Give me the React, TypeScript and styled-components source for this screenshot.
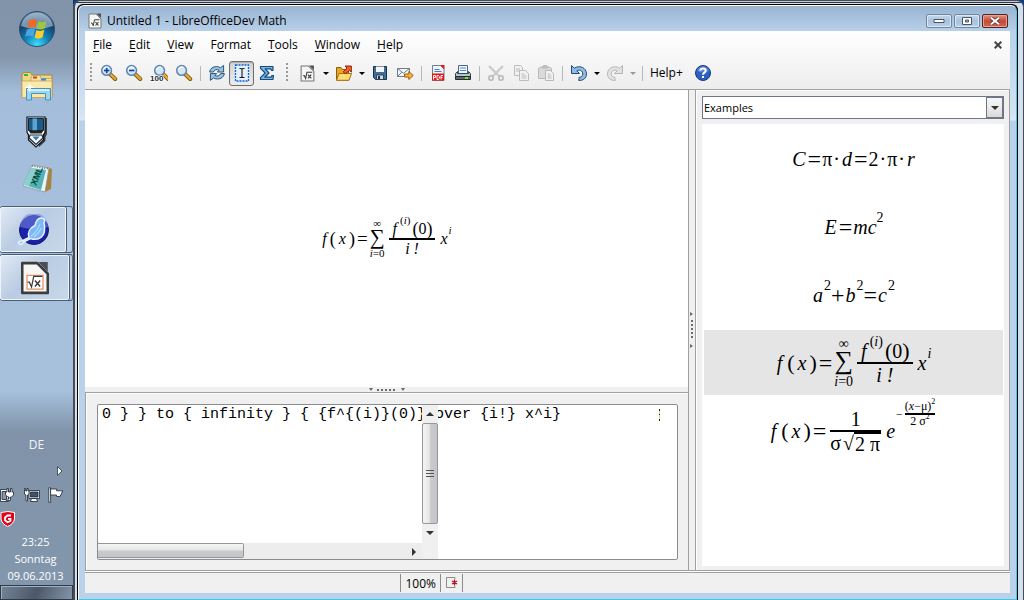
import React from "react";
import styled, { createGlobalStyle, css, ThemeProvider } from "styled-components";

const GlobalStyle = createGlobalStyle`
  * { box-sizing: border-box; }
  html, body { margin: 0; padding: 0; }
  body { font-family: "Open Sans", "Noto Sans", sans-serif; font-size: 12px; color: #000; background: #0a3c86; }
  button, select, textarea { font: inherit; color: inherit; margin: 0; padding: 0; border: 0; background: none; }
  ul { list-style: none; margin: 0; padding: 0; }
  svg { display: block; }
`;

/* ---------- desktop ---------- */

const Desktop = styled.div`
  display: flex;
  min-height: 100vh;
  overflow: hidden;
`;

const Taskbar = styled.aside`
  width: 73px;
  flex: none;
  display: flex;
  flex-direction: column;
  align-items: center;
  background: linear-gradient(#8093a8 0, #8497ad 58px, #a4bddb 92px, #a7c1dd 65%, #8093a9 72%, #8296ac 100%);
`;

const Launcher = styled.button<{ $height: number }>`
  width: 73px;
  height: ${(p) => p.$height}px;
  display: flex;
  align-items: center;
  justify-content: center;
`;

const TaskStack = styled.div`
  align-self: stretch;
  height: 47px;
  margin-bottom: 1px;
  display: flex;
  border-top: 1px solid #4a5d76;
  border-bottom: 1px solid #4a5d76;
  border-right: 1px solid #5c6f88;
  border-radius: 3px;
  background: #bacde3;
`;

const TaskButton = styled.button<{ $width: number }>`
  width: ${(p) => p.$width}px;
  display: flex;
  align-items: center;
  justify-content: center;
  border: 1px solid #eef4fa;
  border-radius: 2px;
  background: linear-gradient(135deg, #dfe9f4, #b9cce3 45%, #c8d8ea);
  box-shadow: 1px 0 0 #4a5d76, -1px 0 0 #4a5d76;
`;

const Language = styled.div`
  margin-top: auto;
  line-height: 16px;
  color: #f2f5f9;
`;

const TrayArrow = styled.button`
  align-self: flex-end;
  height: 16px;
  margin: 10px 10px 8px;
`;

const Tray = styled.div`
  align-self: stretch;
  display: flex;
  flex-wrap: wrap;
  gap: 8px;
`;

const TrayButton = styled.button`
  width: 16px;
  height: 16px;
`;

const Clock = styled.time`
  padding: 6px 2px 0 0;
  font-size: 11px;
  line-height: 17px;
  text-align: center;
  color: #fff;
`;

const ShowDesktop = styled.button`
  align-self: stretch;
  height: 15px;
  margin-top: 1px;
  border: 1px solid #303a46;
  box-shadow: inset 1px 1px 0 #a2b0c0;
  background: linear-gradient(110deg, #748599, #4c5868 50%, #8395a9);
`;

/* ---------- window frame ---------- */

const Backdrop = styled.div`
  flex: 1;
  min-width: 0;
  display: flex;
  padding: 3px 5px 0 2px;
  border: solid #464b56;
  border-width: 1px 1px 0 2px;
  border-radius: 7px 7px 0 0;
  background: linear-gradient(#c4cad3 0 1px, #333740 1px 2px, #d3dfec 2px);
`;

const Frame = styled.div`
  flex: 1;
  min-width: 0;
  display: flex;
  border: solid #000;
  border-width: 1px 1px 0 1px;
  border-radius: 6px 6px 0 0;
  background: #000;
`;

const AppWindow = styled.div`
  flex: 1;
  min-width: 0;
  display: flex;
  flex-direction: column;
  padding: 0 6px 6px;
  border: 1px solid #fff;
  border-right-color: #40c8e8;
  border-bottom-color: #40c8e8;
  border-radius: 6px 6px 0 0;
  background: linear-gradient(#99b4d1 0, #b9d1ea 26px, #d3e3f4 108px, #dbe8f6 114px, #b9d1ea 115px);
`;

const TitleBar = styled.header`
  height: 25px;
  display: flex;
  align-items: center;
  gap: 4px;
  padding: 5px 2px 0;
`;

const Title = styled.h1`
  flex: 1;
  margin: 0;
  font-size: 12px;
  font-weight: 400;
  line-height: 16px;
`;

const WindowButton = styled.button<{ $danger?: boolean }>`
  width: 26px;
  height: 14px;
  margin-left: -2px;
  display: flex;
  align-items: center;
  justify-content: center;
  border: 1px solid ${(p) => (p.$danger ? "#5b1e22" : "#6f87a3")};
  border-radius: 2px;
  box-shadow: inset 0 0 0 1px ${(p) => (p.$danger ? "#e5a493" : "#dbe7f3")};
  background: ${(p) =>
    p.$danger ? "linear-gradient(#dd9583, #c24a35 50%, #d06a50)" : "linear-gradient(#c6d7ea, #a9c1dc 50%, #b8cfe6)"};
`;

const WindowButtons = styled.div`
  display: flex;
  gap: 4px;
`;

const Content = styled.div`
  flex: 1;
  min-height: 0;
  display: flex;
  flex-direction: column;
  background: #f0f0f0;
`;

const Chrome = styled.div`
  border-bottom: 1px solid #a0a0a0;
  background: linear-gradient(#fff, #fafafa 30%, #ededed);
`;

const MenuBar = styled.nav`
  height: 29px;
  display: flex;
  align-items: center;
  gap: 1px;
  padding: 0 5px 2px 0;
`;

const MenuItem = styled.button`
  padding: 0 8px;
  line-height: 20px;
  u { text-underline-offset: 2px; }
`;

const CloseDocument = styled.button`
  width: 14px;
  height: 14px;
  margin-left: auto;
  display: flex;
  align-items: center;
  justify-content: center;
`;

const Toolbar = styled.div`
  height: 29px;
  display: flex;
  align-items: center;
  padding-bottom: 3px;
`;

const Grip = styled.span<{ $wide?: boolean }>`
  width: ${(p) => (p.$wide ? 16 : 11)}px;
  height: 20px;
  display: flex;
  justify-content: center;
  &::before {
    content: "";
    width: 2px;
    background: repeating-linear-gradient(#9a9a9a 0 2px, transparent 2px 4px);
  }
`;

const Divider = styled.span`
  width: 8px;
  height: 15px;
  display: flex;
  justify-content: center;
  &::before {
    content: "";
    width: 1px;
    background: #b9b9b9;
  }
`;

const ToolButton = styled.button<{ $active?: boolean }>`
  width: 25px;
  height: 25px;
  display: flex;
  align-items: center;
  justify-content: center;
  ${(p) =>
    p.$active &&
    css`
      border: 1px solid #6e6e6e;
      border-radius: 3px;
      background: linear-gradient(#d4d4d4, #ececec);
      box-shadow: inset 0 1px 1px #aaa;
    `}
`;

const Caret = styled.button<{ $faded?: boolean }>`
  width: 11px;
  height: 25px;
  display: flex;
  align-items: center;
  justify-content: center;
  &::before {
    content: "";
    border: solid transparent;
    border-width: 3px 3px 0;
    border-top-color: ${(p) => (p.$faded ? "#9a9a9a" : "#000")};
  }
`;

const HelpText = styled.button`
  width: 44px;
  text-align: left;
  padding-left: 4px;
  line-height: 20px;
`;

/* ---------- workspace ---------- */

const Workspace = styled.div`
  flex: 1;
  min-height: 0;
  display: flex;
  border-bottom: 1px solid #a0a0a0;
`;

const LeftPane = styled.div`
  flex: 1;
  min-width: 0;
  display: flex;
  flex-direction: column;
  border-right: 1px solid #a0a0a0;
`;

const Canvas = styled.main`
  flex: 1;
  display: flex;
  align-items: center;
  justify-content: center;
  background: #fff;
`;

const HorizontalSplitter = styled.div`
  height: 5px;
  display: flex;
  justify-content: center;
  align-items: center;
`;

const VerticalSplitter = styled.div`
  width: 6px;
  display: flex;
  justify-content: center;
  align-items: center;
`;

const CommandPane = styled.section`
  height: 178px;
  padding: 11px 10px 10px 11px;
  border: 1px solid #a0a0a0;
  border-width: 1px 0 0 1px;
  box-shadow: inset 1px 1px 0 #fff;
`;

const Editor = styled.div`
  position: relative;
  height: 156px;
  border: 1px solid #8a8c92;
  border-radius: 2px;
  background: #fff;
`;

const CommandInput = styled.textarea`
  display: block;
  width: 100%;
  height: 100%;
  padding: 1px 0 0 4px;
  resize: none;
  outline: 0;
  overflow: hidden;
  white-space: pre;
  font-family: "Liberation Mono", monospace;
  font-size: 15px;
  line-height: 17px;
`;

const BraceTrace = styled.span`
  position: absolute;
  top: 4px;
  right: 17px;
  width: 1px;
  height: 12px;
  background: linear-gradient(#222 0 2px, #f0cc80 2px 5px, #222 5px 6px, #f0cc80 6px 10px, #222 10px);
`;

const ScrollColumn = styled.div`
  position: absolute;
  top: 0;
  bottom: 0;
  left: 324px;
  width: 16px;
  padding-bottom: 17px;
  display: flex;
  flex-direction: column;
  background: #f0f0f0;
`;

const ScrollRow = styled.div`
  position: absolute;
  left: 0;
  bottom: 0;
  width: 324px;
  height: 16px;
  display: flex;
  justify-content: space-between;
  background: #ededed;
`;

const ScrollArrow = styled.button`
  width: 16px;
  height: 18px;
  display: flex;
  align-items: center;
  justify-content: center;
`;

const VerticalThumb = styled.div`
  flex: 1;
  display: flex;
  align-items: center;
  justify-content: center;
  border: 1px solid #979797;
  border-radius: 2px;
  background: linear-gradient(90deg, #f5f5f5, #e6e6e7 45%, #c9cacd 55%, #c4c5ca);
`;

const HorizontalThumb = styled.div`
  width: 146px;
  height: 15px;
  border: 1px solid #979797;
  border-left: 0;
  border-radius: 0 2px 2px 0;
  background: linear-gradient(#f5f5f5, #e6e6e7 45%, #c9cacd 55%, #c4c5ca);
`;

const ElementsPane = styled.section`
  width: 315px;
  display: flex;
  flex-direction: column;
  gap: 5px;
  padding: 6px 5px 4px 6px;
  border: solid #a0a0a0;
  border-width: 0 1px 0 1px;
  box-shadow: inset 1px 1px 0 #fff;
`;

const CategoryField = styled.label`
  position: relative;
  height: 23px;
  display: flex;
  border: 1px solid #6f7684;
  background: #fff;
`;

const Category = styled.select`
  flex: 1;
  padding: 0 1px;
  appearance: none;
  outline: 0;
  font-size: 11px;
`;

const CategoryArrow = styled.span`
  width: 17px;
  display: flex;
  align-items: center;
  justify-content: center;
  border: 1px solid #6f7684;
  background: linear-gradient(#f6f6f6, #ebebeb 50%, #d8d8d8);
  pointer-events: none;
`;

const Examples = styled.ul`
  flex: 1;
  display: flex;
  flex-direction: column;
  gap: 3px;
  padding: 2px 1px 0 2px;
  background: #fff;
`;

const Example = styled.li<{ $selected?: boolean }>`
  height: 65px;
  display: flex;
  align-items: center;
  justify-content: center;
  background: ${(p) => (p.$selected ? "#e5e5e5" : "transparent")};
`;

const StatusBar = styled.footer`
  height: 21px;
  margin-top: 1px;
  display: flex;
  align-items: center;
  border-top: 1px solid #a0a0a0;
  box-shadow: 0 -1px 0 #fff;
`;

const StatusSpacer = styled.span`
  width: 34%;
`;

const StatusCell = styled.span<{ $last?: boolean }>`
  height: 18px;
  display: flex;
  align-items: center;
  padding: 0 4px 0 5px;
  border-left: 1px solid #8c8c8c;
  border-right: ${(p) => (p.$last ? "1px solid #8c8c8c" : "0")};
`;

/* ---------- formula typesetting ---------- */

const display = { base: 16, small: 11, relation: 19, paren: 18, fn: 1, gap: 2, lift: 16, part: 18, op: 21, sum: 18, drop: 3, limit: 9 };
const sample = { base: 20, small: 14, relation: 24, paren: 22, fn: 3, gap: 2, lift: 18, part: 22, op: 26, sum: 23, drop: 4, limit: 11 };

const Row = styled.span<{ $close?: boolean }>`
  display: flex;
  align-items: center;
  justify-content: center;
  gap: ${(p) => (p.$close ? 1 : p.theme.gap)}px;
  font-family: "Liberation Serif", serif;
  font-size: ${(p) => p.theme.base}px;
  line-height: ${(p) => p.theme.base}px;
  white-space: pre;
`;

const Tight = styled(Row)`
  gap: 0;
`;

const Var = styled.i`
  padding: 0 1px;
`;

const FunctionName = styled(Var)`
  padding-right: ${(p) => p.theme.fn}px;
`;

const Relation = styled.span`
  font-size: ${(p) => p.theme.relation}px;
`;

const Paren = styled.span`
  font-size: ${(p) => p.theme.paren}px;
`;

const Sup = styled(Tight)`
  font-size: ${(p) => p.theme.small}px;
  line-height: ${(p) => p.theme.small}px;
  margin-bottom: ${(p) => p.theme.lift}px;
`;

const Limits = styled.span`
  display: flex;
  flex-direction: column;
  align-items: center;
  font-size: ${(p) => p.theme.small}px;
  line-height: ${(p) => p.theme.limit}px;
`;

const BigOperator = styled.span`
  padding-bottom: ${(p) => p.theme.drop}px;
  font-size: ${(p) => p.theme.op}px;
  line-height: ${(p) => p.theme.sum}px;
`;

const Fraction = styled.span`
  display: flex;
  flex-direction: column;
  margin: 0 2px;
`;

const Numerator = styled(Row)`
  height: ${(p) => p.theme.part}px;
  padding: 0 3px;
`;

const Denominator = styled(Row)`
  height: ${(p) => p.theme.part}px;
`;

const Bar = styled.span`
  height: 2px;
  background: #000;
`;

const Root = styled.span`
  padding: 0 1px;
  border-top: 2px solid #000;
`;

const Exponent = styled(Tight)`
  font-size: 12px;
  line-height: 12px;
  margin-bottom: 34px;
`;

const SmallPart = styled(Tight)`
  font-size: 12px;
  line-height: 13px;
  height: 13px;
`;

const TinySup = styled.span`
  font-size: 8px;
  line-height: 8px;
  margin-bottom: 8px;
`;

const FunctionHead = () => (
  <>
    <FunctionName>f</FunctionName>
    <Paren>(</Paren>
    <Var>x</Var>
    <Paren>)</Paren>
    <Relation>=</Relation>
  </>
);

const Taylor = () => (
  <Row>
    <FunctionHead />
    <Limits>
      <span>∞</span>
      <BigOperator>∑</BigOperator>
      <span><i>i</i>=0</span>
    </Limits>
    <Fraction>
      <Numerator>
        <Var>f</Var>
        <Sup>(<i>i</i>)</Sup>
        <Tight><Paren>(</Paren>0<Paren>)</Paren></Tight>
      </Numerator>
      <Bar />
      <Denominator><i>i !</i></Denominator>
    </Fraction>
    <Tight>
      <Var>x</Var>
      <Sup><i>i</i></Sup>
    </Tight>
  </Row>
);

const Gaussian = () => (
  <Row>
    <FunctionHead />
    <Fraction>
      <Numerator><span>1</span></Numerator>
      <Bar />
      <Denominator>
        <span>σ</span>
        <Tight><span>√</span><Root>2 π</Root></Tight>
      </Denominator>
    </Fraction>
    <Tight>
      <Var>e</Var>
      <Exponent>
        <span>−</span>
        <Fraction>
          <SmallPart>(<i>x</i>−μ)<TinySup>2</TinySup></SmallPart>
          <Bar />
          <SmallPart>2 σ<TinySup>2</TinySup></SmallPart>
        </Fraction>
      </Exponent>
    </Tight>
  </Row>
);

/* ---------- icons ---------- */

const Magnifier = ({ sign }: { sign?: "plus" | "minus" | "hundred" }) => (
  <svg width="18" height="18" viewBox="0 0 18 18">
    <g transform={sign === "hundred" ? "translate(3 0)" : undefined}>
      <path d="M10 10l5.2 5" stroke="#7b5410" strokeWidth="4" strokeLinecap="round" />
      <path d="M10.6 10.4l4.6 4.4" stroke="#e6a92e" strokeWidth="2.4" strokeLinecap="round" />
      <circle cx="6.6" cy="6.4" r="4.9" fill="#d4e6f6" stroke="#5f86b0" strokeWidth="1.5" />
      <path d="M3.6 5.6a3.3 3.3 0 0 1 5-1.8" stroke="#fff" strokeWidth="1.2" fill="none" />
      {(sign === "plus" || sign === "minus") && <path d="M4 6.5h5.4" stroke="#0c4391" strokeWidth="1.6" />}
      {sign === "plus" && <path d="M6.7 3.8v5.4" stroke="#0c4391" strokeWidth="1.6" />}
    </g>
    {sign === "hundred" && (
      <text x="0" y="17" fontSize="8" fontWeight="700" fontFamily="Liberation Sans, sans-serif" fill="#122c42" stroke="#fff" strokeWidth="1.5" paintOrder="stroke">100</text>
    )}
  </svg>
);

const Refresh = () => (
  <svg width="18" height="18" viewBox="0 0 18 18" fill="#9fc3de" stroke="#27567c" strokeWidth="1" strokeLinejoin="round">
    <path d="M1.6 8C2.2 4.4 5 2.6 8.6 2.6c1.6 0 2.8.4 3.8 1.2L15.600 1.400V8H9.400l1.800-2C8.600 5 6.200 5.600 5.400 8z" />
    <path d="M16.400 9.600c-.6 3.600-3.400 5.400-7 5.400-1.600 0-2.800-.4-3.800-1.200L2.400 16.400V9.600h6.200l-1.800 2c2.600 1 5 .4 5.800-2z" />
  </svg>
);

const TextCursor = () => (
  <svg width="16" height="18" viewBox="0 0 16 18" fill="none">
    <path d="M1.500 1h13v16h-13z" fill="#e4effc" stroke="#0a66d0" strokeWidth="1.300" strokeDasharray="2 1" />
    <path d="M5.500 4.500h1.500q1 0 1 1 0-1 1-1h1.500M8 5v8M5.500 13.500h1.500q1 0 1-1 0 1 1 1h1.500" stroke="#1a1a1a" strokeWidth="1.100" />
  </svg>
);

const Sigma = () => (
  <svg width="16" height="16" viewBox="0 0 16 16">
    <path d="M1.500 1.500h12.500v3.800h-1.600l-.6-1.400H6.200L10 8l-4.300 4.200h6.400l.7-1.500h1.700l-.6 3.800H1.500v-1.900L6.200 8 1.500 3.400z" fill="#7fb4dc" stroke="#0f4c81" strokeWidth="1.200" strokeLinejoin="round" />
  </svg>
);

const MathDocument = ({ size = 16, framed }: { size?: number; framed?: boolean }) => (
  <svg width={size} height={size} viewBox="0 0 32 32">
    <path d="M4 2h14l10 10v18H4z" fill="#f6f6f4" stroke={framed ? "#3c3c3c" : "#777"} strokeWidth={framed ? 2.400 : 2} strokeLinejoin="round" />
    <path d="M19 1h9v9z" fill="#4a4f57" />
    {framed && <path d="M8.500 13.500h15v13h-15z" fill="#fff" stroke="#e8925e" strokeWidth="1.200" />}
    <path d="M8 20h2l2.500 5.500L15 13.500h10" fill="none" stroke="#3b3b3b" strokeWidth={framed ? 1.400 : 2} transform={framed ? "translate(2.500 3.500) scale(.82)" : undefined} />
    <path d="M17 18l6 7m0-7l-6 7" stroke="#3b3b3b" strokeWidth={framed ? 1.700 : 2.200} transform={framed ? "translate(2 3.500) scale(.82)" : undefined} />
  </svg>
);

const OpenFolder = () => (
  <svg width="18" height="18" viewBox="0 0 18 18" strokeLinejoin="round">
    <path d="M1.500 16V3.500H6L7.500 5.500h6V16z" fill="#e6a626" stroke="#8d5b09" />
    <path d="M1.500 16.300L4 9.500h12.500L14 16.300z" fill="#ffdc73" stroke="#a56e10" />
    <path d="M10 2h6.300v6.200l-2-2L10.500 10 8.300 7.800 12 4z" fill="#f0642c" stroke="#8f2106" />
  </svg>
);

const Save = () => (
  <svg width="16" height="16" viewBox="0 0 16 16">
    <path d="M1.500 1.500h13v13h-11l-2-2z" fill="#3f6e96" stroke="#16324c" />
    <path d="M4 1.500h8v5.500H4z" fill="#f3f6f8" />
    <path d="M4.500 10h7v4.500h-7z" fill="#cfd9e0" stroke="#16324c" strokeWidth=".8" />
    <path d="M6 11h2v3H6z" fill="#16324c" />
  </svg>
);

const Mail = () => (
  <svg width="18" height="16" viewBox="0 0 18 16">
    <path d="M1.500 3.500h12v8h-12z" fill="#f5f8fb" stroke="#6c7f92" />
    <path d="M1.500 3.500l6 4.700 6-4.700M1.500 11.500l4.300-4.300" fill="none" stroke="#6c7f92" />
    <path d="M8.500 9h4.300V6.500l4.400 4-4.400 4V12H8.500z" fill="#f7b733" stroke="#a35a0c" strokeLinejoin="round" />
  </svg>
);

const Pdf = () => (
  <svg width="16" height="18" viewBox="0 0 16 18">
    <path d="M2.500 1.500h8l3.500 3.500v11.500H2.500z" fill="#eef3f7" stroke="#6b8195" />
    <path d="M10 1h4.500v4.500z" fill="#dd1c1c" />
    <path d="M4.500 5.500h5M4.500 7.500h7" stroke="#4182ba" />
    <path d="M2 9.500h12v7H2z" fill="#e01818" />
    <path d="M3.500 15.500v-4h2v2h-2M7 11.500v4h1.500l.8-1v-2l-.8-1zM11 15.500v-4h2m-2 2h1.500" fill="none" stroke="#fff" />
  </svg>
);

const Printer = () => (
  <svg width="18" height="18" viewBox="0 0 18 18">
    <path d="M4.500 1.500h9v8h-9z" fill="#f0f6fb" stroke="#4c6780" />
    <path d="M6 4h6M6 6.500h6" stroke="#4c8fcf" />
    <path d="M1.500 9.500l2-2v2h11v-2l2 2v5h-15z" fill="#b9c3ca" stroke="#39434c" strokeLinejoin="round" />
    <path d="M1.500 12.500h15v3h-15z" fill="#5d6870" stroke="#242c33" />
    <path d="M11 13h3v2h-3z" fill="#79e21a" />
  </svg>
);

const Cut = () => (
  <svg width="18" height="18" viewBox="0 0 18 18" fill="none" stroke="#bebebe" strokeWidth="1.800">
    <path d="M2 2l10.500 10.500M16 2L5.500 12.500" stroke="#cacaca" strokeWidth="2.200" />
    <circle cx="4" cy="14" r="2.200" />
    <circle cx="14" cy="14" r="2.200" />
  </svg>
);

const Copy = () => (
  <svg width="18" height="18" viewBox="0 0 18 18" fill="#f1f1f1" stroke="#bcbcbc">
    <path d="M2.500 1.500h6l2 2v8h-8zM4 5h4M4 7h4" />
    <path d="M7.500 6.500h6l3 3v7h-9zM9.500 10h3M9.500 12h5M9.500 14h5" />
  </svg>
);

const Paste = () => (
  <svg width="18" height="18" viewBox="0 0 18 18" fill="#dadada" stroke="#b8b8b8">
    <path d="M1.500 4.500L3.500 3h9l2 1.500v10h-13z" />
    <path d="M5 4l1.500-2.500h3L11 4z" fill="#c4c4c4" />
    <path d="M8.500 6.500h5l3 3v7h-8zM10.500 10h3M10.500 12h4M10.500 14h4" fill="#f3f3f3" />
  </svg>
);

const Turn = ({ redo }: { redo?: boolean }) => (
  <svg width="18" height="18" viewBox="0 0 18 18" strokeLinejoin="round">
    <path
      transform={redo ? "translate(18 0) scale(-1 1)" : undefined}
      d="M1.500 1.500v8h8L6.800 6.800c2.200-1.400 6-.4 6 3.200 0 2.200-1.800 3.200-3.600 3.200l-.4 3.300c4.400.2 7.700-2.400 7.700-6.700C16.500 3.600 9.400.8 4.300 4.200z"
      fill={redo ? "#e2e2e2" : "#8fbce0"}
      stroke={redo ? "#b6b6b6" : "#1d4d78"}
    />
  </svg>
);

const Help = () => (
  <svg width="18" height="18" viewBox="0 0 18 18">
    <circle cx="9" cy="9" r="7.500" fill="#2c5fc0" stroke="#173a80" />
    <path d="M3 7a6.200 6.200 0 0 1 12 0q-6 3-12 0z" fill="#6f97de" opacity=".6" />
    <path d="M6.300 6.800C6.300 3.600 11.700 3.800 11.700 6.800 11.700 8.800 9 8.600 9 10.800" fill="none" stroke="#fff" strokeWidth="2" />
    <path d="M8 12h2v2H8z" fill="#fff" />
  </svg>
);

const StartOrb = () => (
  <svg width="38" height="38" viewBox="0 0 38 38">
    <defs>
      <radialGradient id="orb" cx=".5" cy=".95" r=".9">
        <stop offset="0" stopColor="#3fe0ff" />
        <stop offset=".4" stopColor="#0f7fb4" />
        <stop offset=".75" stopColor="#1a3f66" />
        <stop offset="1" stopColor="#5d7f9f" />
      </radialGradient>
    </defs>
    <circle cx="19" cy="19" r="17.500" fill="url(#orb)" stroke="#2a4f74" />
    <path d="M3 16C5 7 12 2.500 19 2.500S33 7 35 16q-16 6-32 0z" fill="#d4e6f3" opacity=".5" />
    <path d="M11 10.500q4.500-2.500 8 0L17.300 18q-4-2.200-8 0z" fill="#ee6a24" />
    <path d="M20.500 11.300q3.500 2.200 8-.4L26.800 18.300q-4 2.300-8 .2z" fill="#9cc83c" />
    <path d="M9 19.500q4-2.200 8 0L15.200 27q-4-2.300-8.200 0z" fill="#4aa4e4" />
    <path d="M18.400 20q4 2 8-.2L24.600 27.300q-4.500 2.500-8 .3z" fill="#ffcb2e" />
  </svg>
);

const Explorer = () => (
  <svg width="34" height="30" viewBox="0 0 34 30">
    <path d="M2 26V4l1.500-2.500h7L12 4h20v22z" fill="#f0d682" stroke="#a98a3c" />
    <path d="M11 7l1-2.500h8l1 3h11V26H11z" fill="#f6e2a0" stroke="#b89a4c" strokeWidth=".7" />
    <path d="M2 10h30v16.500H2z" fill="#f9e9ae" stroke="#c2a455" strokeWidth=".8" />
    <path d="M4 3h4v2H4z" fill="#2cb64a" />
    <path d="M13 5.500h4v2h-4z" fill="#da3b2c" />
    <path d="M21 7.500h5v2h-5z" fill="#2b8fe0" />
    <path d="M6.500 29V17.500h24V29h-5v-6.500h-14V29z" fill="#9dd6f2" stroke="#4393c0" />
    <path d="M8 19h21" stroke="#e4f6ff" strokeWidth="1.500" />
    <path d="M9.500 12v9M5 16.500h9M7 14l5 5m0-5l-5 5" stroke="#fff" strokeWidth=".8" />
  </svg>
);

const Pen = () => (
  <svg width="24" height="32" viewBox="0 0 24 32">
    <path d="M5 2h17v16l-1.500 3v4L14 31z" fill="#3b3f44" />
    <path d="M2 1h18v15l-1.500 3v5L11 31l-7.500-7v-5L2 16z" fill="#fff" stroke="#111" strokeWidth="1.200" />
    <path d="M3.500 2.500h15v12h-15z" fill="#1c5a86" stroke="#0d2638" />
    <path d="M7.500 2.500h4.500v12H7.500z" fill="#5ba4d2" />
    <path d="M3.500 14.500h15l-2 3h-11z" fill="#222" />
    <path d="M5 19h12l1 3-7 6.500L4 22z" fill="#eef5f9" stroke="#1a2833" strokeWidth="1.200" />
    <path d="M7.500 20.500h7L11 24.500z" fill="#2c7ba8" />
  </svg>
);

const XmlPad = () => (
  <svg width="32" height="30" viewBox="0 0 32 30">
    <path d="M26 4l5 2-1 20-6 3z" fill="#a9823c" />
    <path d="M11 2l17 3-4 24-22-6z" fill="#eef3f3" stroke="#809a9a" strokeWidth=".8" />
    <path d="M10 5l15 2-5 20L2 21.500z" fill="#54b3b8" />
    <path d="M10 5l6 .8L8 23.200 2 21.500z" fill="#9ad6d8" opacity=".8" />
    <text transform="translate(15 23) rotate(-68)" fontSize="9" fontWeight="700" fontFamily="Liberation Sans, sans-serif" fill="#0b4a35">XML</text>
    <path d="M11 3l17 3" stroke="#6b7777" strokeWidth="1.500" strokeDasharray="1 1.500" />
  </svg>
);

const SeaMonkey = () => (
  <svg width="34" height="32" viewBox="0 0 34 32">
    <circle cx="18" cy="16" r="14.500" fill="#1c1fa8" stroke="#14156c" />
    <path d="M4 13a14 14 0 0 1 28 0q-13 4-28 0z" fill="#6f82de" opacity=".6" />
    <path d="M2.500 29.500c0-1.500 1.500-2.500 3.500-2.500l7-3.500c-2-5 1-9.500 6-12 1-4.500 3.500-8 7-7.500 2.500.5 3.500 2.500 2 4.500 1 5 1.500 11-2.500 14.500-3.500 3-8 2.500-11 1.500L7.500 28c-.5 2-3.500 3-5 1.500z" fill="#7ab8f8" stroke="#e5f3ff" strokeWidth="1.500" />
    <path d="M15 22.500q6-5 9-12M18 23q5-4 7.500-9" stroke="#b5daff" strokeWidth="1.200" fill="none" />
  </svg>
);

const PowerIcon = () => (
  <svg width="16" height="16" viewBox="0 0 16 16" stroke="#1c2735" strokeWidth=".8">
    <path d="M.5 2.500h8v12h-8z" fill="#fff" />
    <path d="M2 4.500h4.500v8H2z" fill="#8798ac" />
    <path d="M5.500 5H7V1.500h1.500V5h2V1.500H12V5h1.500v3l-2 2h-1v3.500H6V12h3v-2H8L5.500 8z" fill="#fff" />
  </svg>
);

const NetworkIcon = () => (
  <svg width="16" height="16" viewBox="0 0 16 16" stroke="#1c2735" strokeWidth=".8">
    <path d="M5 3.500h10.500v8H5z" fill="#fff" />
    <path d="M6.500 5H14v5H6.500z" fill="#40536a" />
    <path d="M7.500 11.500h5l1 3h-7z" fill="#fff" />
    <path d="M.5 1.500h1.200V4H3V1.500h1.200V4H5v3L3.500 8v6H2V8L.5 7z" fill="#fff" />
  </svg>
);

const FlagIcon = () => (
  <svg width="16" height="16" viewBox="0 0 16 16" stroke="#1c2735" strokeWidth=".8">
    <path d="M.8.800h1.800v14.500H.8z" fill="#fff" />
    <path d="M2.600 2h6v1.800h6.200L12 9.500H8.500V8H2.600z" fill="#fff" />
  </svg>
);

const ShieldIcon = () => (
  <svg width="16" height="16" viewBox="0 0 16 16">
    <path d="M1 1.500q7-2 13.500 0v6.500q-1 5-6.800 7.500Q2 13 1 8z" fill="#e2001a" stroke="#fff" />
    <path d="M11 4.500H7.500L5 6.500v2.800l2.500 2 3-1.300V7.800H8" fill="none" stroke="#fff" strokeWidth="1.800" />
  </svg>
);

const ModifiedIcon = () => (
  <svg width="12" height="12" viewBox="0 0 12 12" fill="none">
    <path d="M9 2V.5H.5v10H9V9" stroke="#8b8b8b" />
    <path d="M8.500 2.500v6M6 4l5 3M11 4L6 7" stroke="#b0121c" strokeWidth="1.300" />
  </svg>
);

const SplitterMarks = ({ vertical }: { vertical?: boolean }) => (
  <svg width={vertical ? 4 : 36} height={vertical ? 36 : 4} viewBox={vertical ? "0 0 4 36" : "0 0 36 4"} fill="#6a6a6a">
    <g transform={vertical ? "matrix(0 1 1 0 0 0)" : undefined}>
      <path d="M0 0h4L2 3zM32 0h4L34 3z" />
      <path d="M8 1h2v2H8zM12 1h2v2h-2zM16 1h2v2h-2zM20 1h2v2h-2zM24 1h2v2h-2z" />
    </g>
  </svg>
);

const Triangle = ({ d }: { d: string }) => (
  <svg width="8" height="8" viewBox="0 0 8 8" fill="#333"><path d={d} /></svg>
);

/* ---------- page ---------- */

const menus: [string, string, string][] = [
  ["", "F", "ile"], ["", "E", "dit"], ["", "V", "iew"], ["F", "o", "rmat"], ["", "T", "ools"], ["", "W", "indow"], ["", "H", "elp"],
];

const command = "0 } } to { infinity } { {f^{(i)}(0)} over {i!} x^i}";

export default function App() {
  return (
    <Desktop>
      <GlobalStyle />
      <Taskbar>
        <Launcher $height={57} aria-label="Start"><StartOrb /></Launcher>
        <Launcher $height={57} aria-label="Explorer"><Explorer /></Launcher>
        <Launcher $height={36} aria-label="Pen"><Pen /></Launcher>
        <Launcher $height={56} aria-label="XML Notepad"><XmlPad /></Launcher>
        <TaskStack><TaskButton $width={66} aria-label="SeaMonkey"><SeaMonkey /></TaskButton></TaskStack>
        <TaskStack><TaskButton $width={69} aria-label="Math"><MathDocument size={34} framed /></TaskButton></TaskStack>
        <Language>DE</Language>
        <TrayArrow aria-label="Show hidden icons">
          <svg width="6" height="10" viewBox="0 0 6 10"><path d="M.5.500L5 5 .5 9.500z" fill="#fff" stroke="#46566a" /></svg>
        </TrayArrow>
        <Tray>
          <TrayButton aria-label="Power"><PowerIcon /></TrayButton>
          <TrayButton aria-label="Network"><NetworkIcon /></TrayButton>
          <TrayButton aria-label="Action center"><FlagIcon /></TrayButton>
          <TrayButton aria-label="Security"><ShieldIcon /></TrayButton>
        </Tray>
        <Clock>23:25<br />Sonntag<br />09.06.2013</Clock>
        <ShowDesktop aria-label="Show desktop" />
      </Taskbar>
      <Backdrop>
        <Frame>
          <AppWindow>
            <TitleBar>
              <MathDocument size={16} />
              <Title>Untitled 1 - LibreOfficeDev Math</Title>
              <WindowButtons>
                <WindowButton aria-label="Minimize">
                  <svg width="12" height="6" viewBox="0 0 12 6"><path d="M1 1.500h10v3H1z" fill="#fff" stroke="#4a5566" /></svg>
                </WindowButton>
                <WindowButton aria-label="Maximize">
                  <svg width="10" height="8" viewBox="0 0 10 8"><path d="M.5.500h9v7h-9z" fill="#fff" stroke="#4a5566" /><path d="M3.500 3h3v2h-3z" fill="#a9c1dc" stroke="#4a5566" /></svg>
                </WindowButton>
                <WindowButton $danger aria-label="Close">
                  <svg width="12" height="8" viewBox="0 0 12 8"><path d="M2 .8l8 6.400M10 .8L2 7.200" stroke="#5a3030" strokeWidth="3.400" /><path d="M2 .8l8 6.400M10 .8L2 7.200" stroke="#fff" strokeWidth="2" /></svg>
                </WindowButton>
              </WindowButtons>
            </TitleBar>
            <Content>
              <Chrome>
                <MenuBar>
                  {menus.map(([a, k, b]) => (
                    <MenuItem key={a + k + b}>{a}<u>{k}</u>{b}</MenuItem>
                  ))}
                  <CloseDocument aria-label="Close document">
                    <svg width="8" height="8" viewBox="0 0 8 8"><path d="M.7.700l6.600 6.600M7.300.700L.7 7.300" stroke="#444" strokeWidth="2" /></svg>
                  </CloseDocument>
                </MenuBar>
                <Toolbar>
                  <Grip />
                  <ToolButton aria-label="Zoom in"><Magnifier sign="plus" /></ToolButton>
                  <ToolButton aria-label="Zoom out"><Magnifier sign="minus" /></ToolButton>
                  <ToolButton aria-label="Zoom 100%"><Magnifier sign="hundred" /></ToolButton>
                  <ToolButton aria-label="Show all"><Magnifier /></ToolButton>
                  <Divider />
                  <ToolButton aria-label="Update"><Refresh /></ToolButton>
                  <ToolButton $active aria-label="Formula cursor"><TextCursor /></ToolButton>
                  <ToolButton aria-label="Catalog"><Sigma /></ToolButton>
                  <Grip $wide />
                  <ToolButton aria-label="New"><MathDocument size={17} /></ToolButton>
                  <Caret aria-label="New options" />
                  <ToolButton aria-label="Open"><OpenFolder /></ToolButton>
                  <Caret aria-label="Open options" />
                  <ToolButton aria-label="Save"><Save /></ToolButton>
                  <ToolButton aria-label="Mail"><Mail /></ToolButton>
                  <Divider />
                  <ToolButton aria-label="Export as PDF"><Pdf /></ToolButton>
                  <ToolButton aria-label="Print"><Printer /></ToolButton>
                  <Divider />
                  <ToolButton aria-label="Cut"><Cut /></ToolButton>
                  <ToolButton aria-label="Copy"><Copy /></ToolButton>
                  <ToolButton aria-label="Paste"><Paste /></ToolButton>
                  <Divider />
                  <ToolButton aria-label="Undo"><Turn /></ToolButton>
                  <Caret aria-label="Undo options" />
                  <ToolButton aria-label="Redo"><Turn redo /></ToolButton>
                  <Caret $faded aria-label="Redo options" />
                  <Divider />
                  <HelpText>Help+</HelpText>
                  <ToolButton aria-label="Help"><Help /></ToolButton>
                </Toolbar>
              </Chrome>
              <Workspace>
                <LeftPane>
                  <Canvas>
                    <ThemeProvider theme={display}><Taylor /></ThemeProvider>
                  </Canvas>
                  <HorizontalSplitter><SplitterMarks /></HorizontalSplitter>
                  <CommandPane>
                    <Editor>
                      <CommandInput aria-label="Commands" defaultValue={command} spellCheck={false} />
                      <BraceTrace />
                      <ScrollRow>
                        <HorizontalThumb />
                        <ScrollArrow aria-label="Scroll right"><Triangle d="M2 0l4 4-4 4z" /></ScrollArrow>
                      </ScrollRow>
                      <ScrollColumn>
                        <ScrollArrow aria-label="Scroll up"><Triangle d="M0 6l4-4 4 4z" /></ScrollArrow>
                        <VerticalThumb>
                          <svg width="8" height="8" viewBox="0 0 8 8"><path d="M0 .5h8M0 3.500h8M0 6.500h8" stroke="#555" /></svg>
                        </VerticalThumb>
                        <ScrollArrow aria-label="Scroll down"><Triangle d="M0 2l4 4 4-4z" /></ScrollArrow>
                      </ScrollColumn>
                    </Editor>
                  </CommandPane>
                </LeftPane>
                <VerticalSplitter><SplitterMarks vertical /></VerticalSplitter>
                <ElementsPane>
                  <CategoryField>
                    <Category aria-label="Category" defaultValue="Examples"><option>Examples</option></Category>
                    <CategoryArrow><Triangle d="M0 2h8L4 6z" /></CategoryArrow>
                  </CategoryField>
                  <ThemeProvider theme={sample}>
                    <Examples>
                      <Example>
                        <Row $close><Var>C</Var><Relation>=</Relation><span>π</span><span>·</span><Var>d</Var><Relation>=</Relation><span>2</span><span>·</span><span>π</span><span>·</span><Var>r</Var></Row>
                      </Example>
                      <Example>
                        <Row $close><Var>E</Var><Relation>=</Relation><Tight><i>mc</i><Sup>2</Sup></Tight></Row>
                      </Example>
                      <Example>
                        <Tight><Var>a</Var><Sup>2</Sup><Relation>+</Relation><Var>b</Var><Sup>2</Sup><Relation>=</Relation><Var>c</Var><Sup>2</Sup></Tight>
                      </Example>
                      <Example $selected><Taylor /></Example>
                      <Example><Gaussian /></Example>
                    </Examples>
                  </ThemeProvider>
                </ElementsPane>
              </Workspace>
              <StatusBar>
                <StatusSpacer />
                <StatusCell>100%</StatusCell>
                <StatusCell $last><ModifiedIcon /></StatusCell>
              </StatusBar>
            </Content>
          </AppWindow>
        </Frame>
      </Backdrop>
    </Desktop>
  );
}
